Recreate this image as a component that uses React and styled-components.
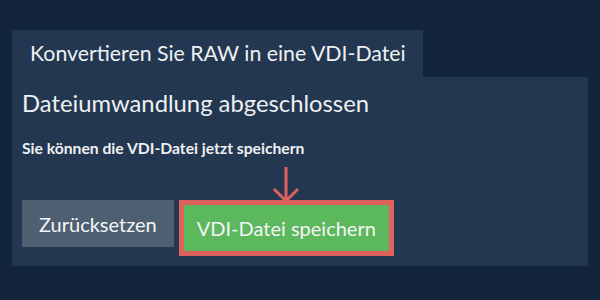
import React from "react";
import styled, { createGlobalStyle } from "styled-components";

const GlobalStyle = createGlobalStyle`
  html, body {
    margin: 0;
    padding: 0;
    background: #13253b;
    font-family: Lato, "Noto Sans", sans-serif;
  }
`;

const Page = styled.div`
  width: 600px;
  height: 300px;
  box-sizing: border-box;
  padding: 30px 12px 0 12px;
`;

const Tab = styled.div`
  display: inline-block;
  background: #233750;
  color: #eef0f2;
  font-size: 21.3px;
  padding: 10px 17px 10px 18px;
  line-height: 27px;
`;

const Panel = styled.div`
  background: #233750;
  padding: 12px 10px 10px 10px;
  color: #eef0f2;
`;

const Heading = styled.div`
  font-size: 23.8px;
  line-height: 28px;
`;

const Note = styled.div`
  font-size: 15.7px;
  font-weight: bold;
  margin-top: 21px;
  line-height: 20px;
`;

const Row = styled.div`
  display: flex;
  align-items: flex-start;
  gap: 5px;
  margin-top: 42px;
`;

const Button = styled.button`
  font-family: Lato, "Noto Sans", sans-serif;
  font-size: 20px;
  color: #f4f6f8;
  border: none;
  height: ${({ $green }) => ($green ? "46px" : "47px")};
  padding: ${({ $green }) => ($green ? "0 13px" : "0 17px")};
  background: ${({ $green }) => ($green ? "#5cb85c" : "#4e5f71")};
`;

const Frame = styled.div`
  position: relative;
  border: 5px solid #e0605e;
  display: flex;
`;

const ArrowMark = styled.svg`
  position: absolute;
  left: 50%;
  top: -39px;
  transform: translateX(-50%);
`;

const Arrow = () => (
  <ArrowMark width="28" height="38" viewBox="0 0 28 38">
    <path d="M14 1 V35 M2 23 L14 35 L26 23" stroke="#e0605e" strokeWidth="3" fill="none" />
  </ArrowMark>
);

export default function App() {
  return (
    <>
      <GlobalStyle />
      <Page>
        <Tab>Konvertieren Sie RAW in eine VDI-Datei</Tab>
        <Panel>
          <Heading>Dateiumwandlung abgeschlossen</Heading>
          <Note>Sie können die VDI-Datei jetzt speichern</Note>
          <Row>
            <Button>Zurücksetzen</Button>
            <Frame>
              <Arrow />
              <Button $green>VDI-Datei speichern</Button>
            </Frame>
          </Row>
        </Panel>
      </Page>
    </>
  );
}
